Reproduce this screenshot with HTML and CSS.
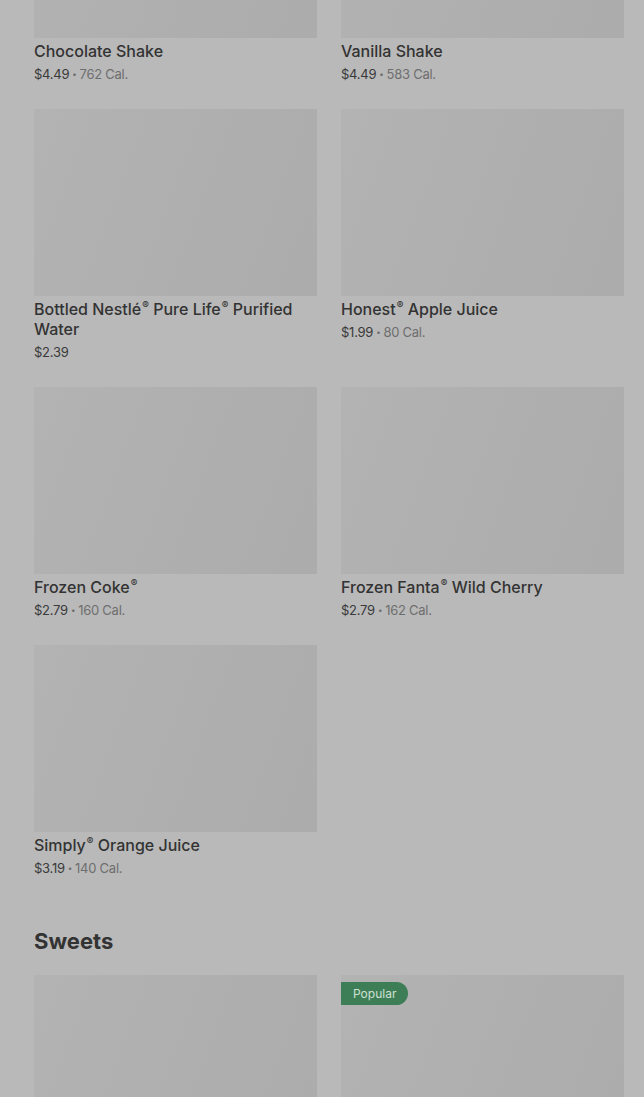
FILE: index.html
```html
<!DOCTYPE html>
<html lang="en">
<head>
<meta charset="utf-8">
<title>Menu</title>
<link rel="stylesheet" href="styles.css">
</head>
<body>
<main class="menu">
  <section class="section section-first">
    <div class="grid">
      <div class="card">
        <div class="thumb"></div>
        <div class="name">Chocolate Shake</div>
        <div class="meta"><span class="price">$4.49</span><span class="dot">•</span><span class="cal">762 Cal.</span></div>
      </div>
      <div class="card">
        <div class="thumb"></div>
        <div class="name">Vanilla Shake</div>
        <div class="meta"><span class="price">$4.49</span><span class="dot">•</span><span class="cal">583 Cal.</span></div>
      </div>
      <div class="card">
        <div class="thumb"></div>
        <div class="name">Bottled Nestlé<sup class="reg">®</sup> Pure Life<sup class="reg">®</sup> Purified<br>Water</div>
        <div class="meta"><span class="price">$2.39</span></div>
      </div>
      <div class="card">
        <div class="thumb"></div>
        <div class="name">Honest<sup class="reg">®</sup> Apple Juice</div>
        <div class="meta"><span class="price">$1.99</span><span class="dot">•</span><span class="cal">80 Cal.</span></div>
      </div>
      <div class="card">
        <div class="thumb"></div>
        <div class="name">Frozen Coke<sup class="reg">®</sup></div>
        <div class="meta"><span class="price">$2.79</span><span class="dot">•</span><span class="cal">160 Cal.</span></div>
      </div>
      <div class="card">
        <div class="thumb"></div>
        <div class="name">Frozen Fanta<sup class="reg">®</sup> Wild Cherry</div>
        <div class="meta"><span class="price">$2.79</span><span class="dot">•</span><span class="cal">162 Cal.</span></div>
      </div>
      <div class="card">
        <div class="thumb"></div>
        <div class="name">Simply<sup class="reg">®</sup> Orange Juice</div>
        <div class="meta"><span class="price">$3.19</span><span class="dot">•</span><span class="cal">140 Cal.</span></div>
      </div>
    </div>
  </section>
  <section class="section">
    <h2 class="heading">Sweets</h2>
    <div class="grid">
      <div class="card">
        <div class="thumb"></div>
      </div>
      <div class="card">
        <div class="thumb"><span class="badge">Popular</span></div>
      </div>
    </div>
  </section>
</main>
</body>
</html>
```
FILE: styles.css
```css
html, body {
  margin: 0;
  padding: 0;
  background: #b9b9b9;
  overflow: hidden;
}
body {
  font-family: Inter, "Noto Sans", Roboto, sans-serif;
  color: #333333;
}
.menu {
  padding: 0 20px 0 34px;
  margin-top: -149px;
}
.section-first {
  padding-bottom: 49px;
}
.grid {
  display: grid;
  grid-template-columns: 1fr 1fr;
  column-gap: 24px;
  row-gap: 25px;
}
.card {
  display: flex;
  flex-direction: column;
}
.thumb {
  position: relative;
  height: 187px;
  background: linear-gradient(110deg, #b3b3b3 0%, #afafaf 50%, #acacac 100%);
}
.name {
  margin-top: 3px;
  font-size: 16px;
  line-height: 20px;
  font-weight: 500;
  color: #333333;
}
.reg {
  display: inline-block;
  font-size: 10px;
  line-height: 10px;
  vertical-align: 6px;
  margin-left: 1px;
}
.meta {
  margin-top: 3px;
  font-size: 13px;
  line-height: 20px;
  letter-spacing: -0.25px;
  display: flex;
  align-items: center;
}
.price {
  color: #3a3a3a;
}
.dot {
  color: #6c6c6c;
  font-size: 8px;
  margin: 0 3px;
}
.cal {
  color: #6e6e6e;
}
.heading {
  margin: 0 0 20px 0;
  font-size: 22px;
  line-height: 28px;
  font-weight: 700;
  color: #333333;
  letter-spacing: 0;
}
.badge {
  position: absolute;
  left: 0;
  top: 7px;
  height: 23px;
  padding: 0 12px 0 12px;
  display: flex;
  align-items: center;
  background: #3e7e57;
  color: #cfe0d3;
  font-size: 12px;
  border-radius: 0 12px 12px 0;
}
```
